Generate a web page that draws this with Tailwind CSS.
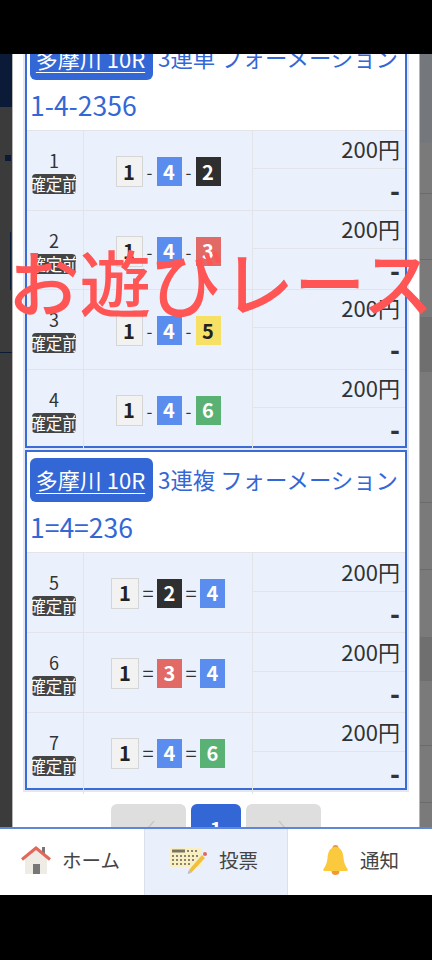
<!DOCTYPE html>
<html lang="ja">
<head>
<meta charset="utf-8">
<script src="https://cdn.jsdelivr.net/npm/@tailwindcss/browser@4"></script>
</head>
<body class="bg-black">
<div class="relative w-[432px] h-[960px] flex flex-col overflow-hidden bg-black font-['Noto_Sans_CJK_JP',sans-serif] text-[#333]">
  <div class="h-[54px] shrink-0 bg-black"></div>

  <div class="flex h-[773px] shrink-0 overflow-hidden">
    <!-- dimmed page, left -->
    <div class="relative w-[12px] shrink-0 flex flex-col bg-[#3b3b3b]">
      <div class="h-[53px] bg-[#0b1a36]"></div>
      <div class="absolute left-[5px] top-[101px] w-[6px] h-[6px] bg-[#0b1a36]"></div>
      <div class="absolute left-[10px] top-[178px] w-[1px] h-[58px] bg-[#0b1a36]"></div>
      <div class="absolute left-0 top-[298px] w-[12px] h-[1px] bg-[#0b1a36]"></div>
    </div>

    <!-- modal -->
    <div class="w-[408px] shrink-0 overflow-hidden bg-white border-x border-[#b5b5b5] px-[12px]">
      <div class="-mt-[26px] flex flex-col gap-[2px]">

        <!-- card 1 -->
        <div class="border-2 border-[#3a6bd6] shadow-[0_0_0_2px_#e3e8f2] bg-white">
          <div class="flex flex-col pt-[6px] pl-[3px] h-[100px]">
            <div class="flex items-center h-[44px] gap-[5px]">
              <span class="h-[44px] w-[123px] pr-[2px] rounded-[6px] bg-[#3367d6] text-white text-[22px] underline underline-offset-4 decoration-1 flex items-center justify-center whitespace-nowrap">多摩川 10R</span>
              <span class="text-[22.4px] text-[#3367d6] whitespace-nowrap">3連単 フォーメーション</span>
            </div>
            <div class="h-[50px] flex items-center text-[26.5px] text-[#3367d6]">1-4-2356</div>
          </div>

          <div class="grid grid-cols-[57px_169px_1fr] h-[79.6px] bg-[#eaf1fd] border-t border-[#e2e4e8]">
            <div class="flex flex-col items-center pt-[17px] pr-[2px] border-r border-[#e2e4e8]">
              <span class="text-[18px] leading-[24px]">1</span>
              <span class="mt-[2px] w-[44px] h-[20px] rounded-[4px] bg-[#444] text-white text-[16.5px] leading-[20px] overflow-hidden flex justify-center whitespace-nowrap">確定前</span>
            </div>
            <div class="flex items-start justify-center pt-[25px] border-r border-[#e2e4e8]">
              <div class="flex items-center">
                <span class="w-[27px] h-[31px] flex items-center justify-center bg-[#f2f2f2] border border-[#d5d5d5] text-[20px] font-bold text-[#222]">1</span>
                <span class="w-[14px] text-center text-[17px] leading-none">-</span>
                <span class="w-[25px] h-[29px] flex items-center justify-center bg-[#5a8ded] text-[20px] font-bold text-white">4</span>
                <span class="w-[14px] text-center text-[17px] leading-none">-</span>
                <span class="w-[25px] h-[29px] flex items-center justify-center bg-[#2f2f2f] text-[20px] font-bold text-white">2</span>
              </div>
            </div>
            <div class="flex flex-col text-right pr-[5px]">
              <div class="h-[38px] -mr-[5px] pr-[5px] border-b border-[#e2e4e8] text-[22px] leading-[34px]">200円</div>
              <div class="flex-1 text-[26px] font-black leading-[42px]">-</div>
            </div>
          </div>

          <div class="grid grid-cols-[57px_169px_1fr] h-[79.6px] bg-[#eaf1fd] border-t border-[#e2e4e8]">
            <div class="flex flex-col items-center pt-[17px] pr-[2px] border-r border-[#e2e4e8]">
              <span class="text-[18px] leading-[24px]">2</span>
              <span class="mt-[2px] w-[44px] h-[20px] rounded-[4px] bg-[#444] text-white text-[16.5px] leading-[20px] overflow-hidden flex justify-center whitespace-nowrap">確定前</span>
            </div>
            <div class="flex items-start justify-center pt-[25px] border-r border-[#e2e4e8]">
              <div class="flex items-center">
                <span class="w-[27px] h-[31px] flex items-center justify-center bg-[#f2f2f2] border border-[#d5d5d5] text-[20px] font-bold text-[#222]">1</span>
                <span class="w-[14px] text-center text-[17px] leading-none">-</span>
                <span class="w-[25px] h-[29px] flex items-center justify-center bg-[#5a8ded] text-[20px] font-bold text-white">4</span>
                <span class="w-[14px] text-center text-[17px] leading-none">-</span>
                <span class="w-[25px] h-[29px] flex items-center justify-center bg-[#e26a66] text-[20px] font-bold text-white">3</span>
              </div>
            </div>
            <div class="flex flex-col text-right pr-[5px]">
              <div class="h-[38px] -mr-[5px] pr-[5px] border-b border-[#e2e4e8] text-[22px] leading-[34px]">200円</div>
              <div class="flex-1 text-[26px] font-black leading-[42px]">-</div>
            </div>
          </div>

          <div class="grid grid-cols-[57px_169px_1fr] h-[79.6px] bg-[#eaf1fd] border-t border-[#e2e4e8]">
            <div class="flex flex-col items-center pt-[17px] pr-[2px] border-r border-[#e2e4e8]">
              <span class="text-[18px] leading-[24px]">3</span>
              <span class="mt-[2px] w-[44px] h-[20px] rounded-[4px] bg-[#444] text-white text-[16.5px] leading-[20px] overflow-hidden flex justify-center whitespace-nowrap">確定前</span>
            </div>
            <div class="flex items-start justify-center pt-[25px] border-r border-[#e2e4e8]">
              <div class="flex items-center">
                <span class="w-[27px] h-[31px] flex items-center justify-center bg-[#f2f2f2] border border-[#d5d5d5] text-[20px] font-bold text-[#222]">1</span>
                <span class="w-[14px] text-center text-[17px] leading-none">-</span>
                <span class="w-[25px] h-[29px] flex items-center justify-center bg-[#5a8ded] text-[20px] font-bold text-white">4</span>
                <span class="w-[14px] text-center text-[17px] leading-none">-</span>
                <span class="w-[25px] h-[29px] flex items-center justify-center bg-[#f7e165] text-[20px] font-bold text-[#222]">5</span>
              </div>
            </div>
            <div class="flex flex-col text-right pr-[5px]">
              <div class="h-[38px] -mr-[5px] pr-[5px] border-b border-[#e2e4e8] text-[22px] leading-[34px]">200円</div>
              <div class="flex-1 text-[26px] font-black leading-[42px]">-</div>
            </div>
          </div>

          <div class="grid grid-cols-[57px_169px_1fr] h-[77px] bg-[#eaf1fd] border-t border-[#e2e4e8]">
            <div class="flex flex-col items-center pt-[17px] pr-[2px] border-r border-[#e2e4e8]">
              <span class="text-[18px] leading-[24px]">4</span>
              <span class="mt-[2px] w-[44px] h-[20px] rounded-[4px] bg-[#444] text-white text-[16.5px] leading-[20px] overflow-hidden flex justify-center whitespace-nowrap">確定前</span>
            </div>
            <div class="flex items-start justify-center pt-[25px] border-r border-[#e2e4e8]">
              <div class="flex items-center">
                <span class="w-[27px] h-[31px] flex items-center justify-center bg-[#f2f2f2] border border-[#d5d5d5] text-[20px] font-bold text-[#222]">1</span>
                <span class="w-[14px] text-center text-[17px] leading-none">-</span>
                <span class="w-[25px] h-[29px] flex items-center justify-center bg-[#5a8ded] text-[20px] font-bold text-white">4</span>
                <span class="w-[14px] text-center text-[17px] leading-none">-</span>
                <span class="w-[25px] h-[29px] flex items-center justify-center bg-[#5ab174] text-[20px] font-bold text-white">6</span>
              </div>
            </div>
            <div class="flex flex-col text-right pr-[5px]">
              <div class="h-[38px] -mr-[5px] pr-[5px] border-b border-[#e2e4e8] text-[22px] leading-[34px]">200円</div>
              <div class="flex-1 text-[26px] font-black leading-[42px]">-</div>
            </div>
          </div>
        </div>

        <!-- card 2 -->
        <div class="border-2 border-[#3a6bd6] shadow-[0_0_0_2px_#e3e8f2] bg-white">
          <div class="flex flex-col pt-[6px] pl-[3px] h-[100px]">
            <div class="flex items-center h-[44px] gap-[5px]">
              <span class="h-[44px] w-[123px] pr-[2px] rounded-[6px] bg-[#3367d6] text-white text-[22px] underline underline-offset-4 decoration-1 flex items-center justify-center whitespace-nowrap">多摩川 10R</span>
              <span class="text-[22.4px] text-[#3367d6] whitespace-nowrap">3連複 フォーメーション</span>
            </div>
            <div class="h-[50px] flex items-center text-[26.5px] text-[#3367d6]">1=4=236</div>
          </div>

          <div class="grid grid-cols-[57px_169px_1fr] h-[80px] bg-[#eaf1fd] border-t border-[#e2e4e8]">
            <div class="flex flex-col items-center pt-[17px] pr-[2px] border-r border-[#e2e4e8]">
              <span class="text-[18px] leading-[24px]">5</span>
              <span class="mt-[2px] w-[44px] h-[20px] rounded-[4px] bg-[#444] text-white text-[16.5px] leading-[20px] overflow-hidden flex justify-center whitespace-nowrap">確定前</span>
            </div>
            <div class="flex items-start justify-center pt-[25px] border-r border-[#e2e4e8]">
              <div class="flex items-center">
                <span class="w-[28px] h-[31px] flex items-center justify-center bg-[#f2f2f2] border border-[#d5d5d5] text-[20px] font-bold text-[#222]">1</span>
                <span class="w-[18px] text-center text-[20px] leading-none">=</span>
                <span class="w-[25px] h-[29px] flex items-center justify-center bg-[#2f2f2f] text-[20px] font-bold text-white">2</span>
                <span class="w-[18px] text-center text-[20px] leading-none">=</span>
                <span class="w-[25px] h-[29px] flex items-center justify-center bg-[#5a8ded] text-[20px] font-bold text-white">4</span>
              </div>
            </div>
            <div class="flex flex-col text-right pr-[5px]">
              <div class="h-[39px] -mr-[5px] pr-[5px] border-b border-[#e2e4e8] text-[22px] leading-[36px]">200円</div>
              <div class="flex-1 text-[26px] font-black leading-[42px]">-</div>
            </div>
          </div>

          <div class="grid grid-cols-[57px_169px_1fr] h-[80px] bg-[#eaf1fd] border-t border-[#e2e4e8]">
            <div class="flex flex-col items-center pt-[17px] pr-[2px] border-r border-[#e2e4e8]">
              <span class="text-[18px] leading-[24px]">6</span>
              <span class="mt-[2px] w-[44px] h-[20px] rounded-[4px] bg-[#444] text-white text-[16.5px] leading-[20px] overflow-hidden flex justify-center whitespace-nowrap">確定前</span>
            </div>
            <div class="flex items-start justify-center pt-[25px] border-r border-[#e2e4e8]">
              <div class="flex items-center">
                <span class="w-[28px] h-[31px] flex items-center justify-center bg-[#f2f2f2] border border-[#d5d5d5] text-[20px] font-bold text-[#222]">1</span>
                <span class="w-[18px] text-center text-[20px] leading-none">=</span>
                <span class="w-[25px] h-[29px] flex items-center justify-center bg-[#e26a66] text-[20px] font-bold text-white">3</span>
                <span class="w-[18px] text-center text-[20px] leading-none">=</span>
                <span class="w-[25px] h-[29px] flex items-center justify-center bg-[#5a8ded] text-[20px] font-bold text-white">4</span>
              </div>
            </div>
            <div class="flex flex-col text-right pr-[5px]">
              <div class="h-[39px] -mr-[5px] pr-[5px] border-b border-[#e2e4e8] text-[22px] leading-[36px]">200円</div>
              <div class="flex-1 text-[26px] font-black leading-[42px]">-</div>
            </div>
          </div>

          <div class="grid grid-cols-[57px_169px_1fr] h-[76px] bg-[#eaf1fd] border-t border-[#e2e4e8]">
            <div class="flex flex-col items-center pt-[17px] pr-[2px] border-r border-[#e2e4e8]">
              <span class="text-[18px] leading-[24px]">7</span>
              <span class="mt-[2px] w-[44px] h-[20px] rounded-[4px] bg-[#444] text-white text-[16.5px] leading-[20px] overflow-hidden flex justify-center whitespace-nowrap">確定前</span>
            </div>
            <div class="flex items-start justify-center pt-[25px] border-r border-[#e2e4e8]">
              <div class="flex items-center">
                <span class="w-[28px] h-[31px] flex items-center justify-center bg-[#f2f2f2] border border-[#d5d5d5] text-[20px] font-bold text-[#222]">1</span>
                <span class="w-[18px] text-center text-[20px] leading-none">=</span>
                <span class="w-[25px] h-[29px] flex items-center justify-center bg-[#5a8ded] text-[20px] font-bold text-white">4</span>
                <span class="w-[18px] text-center text-[20px] leading-none">=</span>
                <span class="w-[25px] h-[29px] flex items-center justify-center bg-[#5ab174] text-[20px] font-bold text-white">6</span>
              </div>
            </div>
            <div class="flex flex-col text-right pr-[5px]">
              <div class="h-[39px] -mr-[5px] pr-[5px] border-b border-[#e2e4e8] text-[22px] leading-[36px]">200円</div>
              <div class="flex-1 text-[26px] font-black leading-[42px]">-</div>
            </div>
          </div>
        </div>

        <!-- pagination -->
        <div class="mt-[12px] flex justify-center gap-[5px]">
          <div class="w-[75px] h-[50px] rounded-[6px] bg-[#dedede] flex justify-center pt-[16px]">
            <svg class="w-[20px] h-[28px]" viewBox="0 0 20 28" fill="none" stroke="#c9c9c9" stroke-width="1.5"><path d="M15 1 4 14l11 13"/></svg>
          </div>
          <div class="w-[50px] h-[50px] rounded-[6px] bg-[#3367d6] text-white text-[20px] font-bold flex items-center justify-center">1</div>
          <div class="w-[75px] h-[50px] rounded-[6px] bg-[#dedede] flex justify-center pt-[16px]">
            <svg class="w-[20px] h-[28px]" viewBox="0 0 20 28" fill="none" stroke="#c9c9c9" stroke-width="1.5"><path d="M5 1l11 13L5 27"/></svg>
          </div>
        </div>
      </div>
    </div>

    <!-- dimmed page, right -->
    <div class="flex-1 flex flex-col bg-[#7a7a7a]">
      <div class="h-[89px] shrink-0 bg-[#74777b]"></div>
      <div class="h-[51px] shrink-0 border-b border-[#6a6a6a]"></div>
      <div class="h-[66px] shrink-0 border-b border-[#6a6a6a]"></div>
      <div class="h-[57px] shrink-0"></div>
      <div class="h-[55px] shrink-0 bg-[#6f6f6f]"></div>
      <div class="h-[131px] shrink-0 border-b border-[#6a6a6a]"></div>
      <div class="h-[67px] shrink-0 border-b border-[#6a6a6a]"></div>
      <div class="h-[67px] shrink-0"></div>
      <div class="h-[44px] shrink-0 bg-[#6f6f6f]"></div>
      <div class="h-[65px] shrink-0 border-b border-[#6a6a6a]"></div>
      <div class="h-[57px] shrink-0 border-b border-[#6a6a6a]"></div>
    </div>
  </div>

  <!-- bottom nav -->
  <nav class="h-[68px] shrink-0 grid grid-cols-3 bg-white border-t-2 border-[#5f86d8] text-[#444]">
    <div class="flex items-center justify-center gap-[11px] pr-[3px] pb-[4px]">
      <svg class="w-[30px] h-[28px]" viewBox="0 0 30 28">
        <rect x="21" y="1" width="3" height="8" fill="#777"/>
        <path d="M4 12 15 3l11 9v16H4z" fill="#efece6"/>
        <path d="M1 13.500 15 2l14 11.500" fill="none" stroke="#e0695a" stroke-width="3"/>
        <rect x="12" y="18" width="7" height="10" fill="#777"/>
      </svg>
      <span class="text-[19.5px] whitespace-nowrap">ホーム</span>
    </div>
    <div class="flex items-center justify-center gap-[12px] bg-[#e9f0fc] border-x border-[#dbe1ea] pr-[5px] pb-[4px]">
      <svg class="w-[38px] h-[28px]" viewBox="0 0 38 28">
        <path d="M1 2h32v19H1z" fill="#f8f0c2"/>
        <rect x="3" y="3.500" width="13" height="3" fill="#7a7468"/>
        <path d="M3 10h2m2 0h2m2 0h2m2 0h2m2 0h2m2 0h2m2 0h2M3 14h2m2 0h2m2 0h2m2 0h2m2 0h2m2 0h2M3 18h2m2 0h2m2 0h2m2 0h2m2 0h2" stroke="#8b8270" stroke-width="2"/>
        <path d="M18 5h2m2 0h2m2 0h2" stroke="#8b8270" stroke-width="2"/>
        <path d="M20 24 33 9l3 3-14 15z" fill="#efbf3d"/>
        <path d="M20 24l-1.500 4 3.500-1z" fill="#bbb"/>
        <circle cx="36" cy="8" r="2" fill="#e0695a"/>
      </svg>
      <span class="text-[19.5px] whitespace-nowrap">投票</span>
    </div>
    <div class="flex items-center justify-center gap-[12px] pl-[2px] pb-[4px]">
      <svg class="w-[25px] h-[30px]" viewBox="0 0 25 30">
        <circle cx="12.500" cy="3" r="3" fill="#ee9a35"/>
        <circle cx="12.500" cy="26" r="4" fill="#ee9a35"/>
        <path d="M12.500 2C18 2 20 7 20.500 13c.4 5 2 8 4 11 .6 1-.2 2-1 2H1.500c-.8 0-1.600-1-1-2 2-3 3.600-6 4-11C5 7 7 2 12.500 2z" fill="#fbc93d"/>
      </svg>
      <span class="text-[19.5px] whitespace-nowrap">通知</span>
    </div>
  </nav>

  <div class="flex-1 bg-black"></div>

  <!-- watermark overlay -->
  <div class="absolute left-[8px] top-[235px] whitespace-nowrap text-[71.5px] font-medium leading-[90px] text-[#ff5555]">お遊びレース</div>
</div>
</body>
</html>
